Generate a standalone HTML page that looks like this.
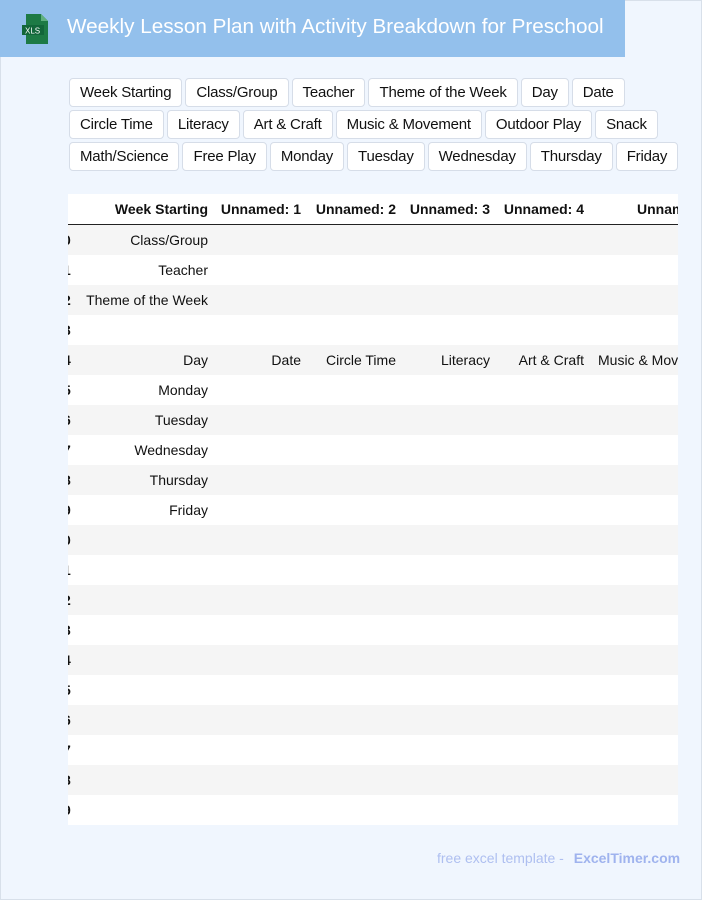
<!DOCTYPE html>
<html><head><meta charset="utf-8"><style>
*{margin:0;padding:0;box-sizing:border-box}
body{width:702px;height:900px;background:#f0f6fe;font-family:"Liberation Sans",sans-serif;position:relative;overflow:hidden;box-shadow:inset 0 0 0 1px #d8e0ea}
.hdr{position:absolute;left:0;top:0;width:625px;height:57px;background:#93c0ec}
.hdr h1{position:absolute;left:67px;top:15px;font-size:20.7px;font-weight:normal;color:#fff;white-space:nowrap}
.icon{position:absolute;left:22px;top:14px;width:28px;height:30px}
.tags{position:absolute;left:69px;top:78px;width:620px}
.row{display:flex;gap:3px;margin-bottom:3px}
.tag{height:29px;padding:0 10px;border:1px solid #d6dde8;border-radius:4px;background:#fff;font-size:15px;letter-spacing:-0.2px;line-height:27px;color:#111;white-space:nowrap}
.tbl{position:absolute;left:68px;top:194px;width:610px;height:631px;overflow:hidden;background:#fff;font-size:14px;color:#111}
.tr{position:absolute;left:0;width:610px;height:30px}
.tr.g{background:#f5f5f5}
.c{position:absolute;top:0;line-height:30px;white-space:nowrap}
.r{text-align:right}
.th{font-weight:bold;border-bottom:1px solid #222;height:31px}
.foot{position:absolute;top:850px;left:437px;font-size:14px;color:#aebff0}
.foot b{color:#9fb3ee;margin-left:6px}
</style></head><body>
<div class="hdr">
<svg class="icon" viewBox="0 0 28 30"><path d="M4 0h15l7 7v23H4z" fill="#1d7a45"/><path d="M19 0v7h7z" fill="#5fb07f"/><rect x="0" y="11" width="22" height="10" fill="#12663a"/><text x="3" y="19.5" font-size="8" fill="#fff" font-family="Liberation Sans">XLS</text></svg>
<h1>Weekly Lesson Plan with Activity Breakdown for Preschool</h1>
</div>
<div class="tags">
<div class="row"><span class="tag">Week Starting</span><span class="tag">Class/Group</span><span class="tag">Teacher</span><span class="tag">Theme of the Week</span><span class="tag">Day</span><span class="tag">Date</span></div>
<div class="row"><span class="tag">Circle Time</span><span class="tag">Literacy</span><span class="tag">Art &amp; Craft</span><span class="tag">Music &amp; Movement</span><span class="tag">Outdoor Play</span><span class="tag">Snack</span></div>
<div class="row"><span class="tag">Math/Science</span><span class="tag">Free Play</span><span class="tag">Monday</span><span class="tag">Tuesday</span><span class="tag">Wednesday</span><span class="tag">Thursday</span><span class="tag">Friday</span></div>
</div>
<div class="tbl">
<div class="tr th" style="top:0">
<span class="c r" style="right:470px">Week Starting</span>
<span class="c r" style="right:377px">Unnamed: 1</span>
<span class="c r" style="right:282px">Unnamed: 2</span>
<span class="c r" style="right:188px">Unnamed: 3</span>
<span class="c r" style="right:94px">Unnamed: 4</span>
<span class="c" style="left:569px">Unnamed: 5</span>
</div>
<div class="tr g" style="top:31px"><span class="c" style="left:-5px;font-weight:bold">0</span><span class="c r" style="right:470px">Class/Group</span></div>
<div class="tr" style="top:61px"><span class="c" style="left:-5px;font-weight:bold">1</span><span class="c r" style="right:470px">Teacher</span></div>
<div class="tr g" style="top:91px"><span class="c" style="left:-5px;font-weight:bold">2</span><span class="c r" style="right:470px">Theme of the Week</span></div>
<div class="tr" style="top:121px"><span class="c" style="left:-5px;font-weight:bold">3</span></div>
<div class="tr g" style="top:151px"><span class="c" style="left:-5px;font-weight:bold">4</span><span class="c r" style="right:470px">Day</span><span class="c r" style="right:377px">Date</span><span class="c r" style="right:282px">Circle Time</span><span class="c r" style="right:188px">Literacy</span><span class="c r" style="right:94px">Art &amp; Craft</span><span class="c" style="left:530px">Music &amp; Movement</span></div>
<div class="tr" style="top:181px"><span class="c" style="left:-5px;font-weight:bold">5</span><span class="c r" style="right:470px">Monday</span></div>
<div class="tr g" style="top:211px"><span class="c" style="left:-5px;font-weight:bold">6</span><span class="c r" style="right:470px">Tuesday</span></div>
<div class="tr" style="top:241px"><span class="c" style="left:-5px;font-weight:bold">7</span><span class="c r" style="right:470px">Wednesday</span></div>
<div class="tr g" style="top:271px"><span class="c" style="left:-5px;font-weight:bold">8</span><span class="c r" style="right:470px">Thursday</span></div>
<div class="tr" style="top:301px"><span class="c" style="left:-5px;font-weight:bold">9</span><span class="c r" style="right:470px">Friday</span></div>
<div class="tr g" style="top:331px"><span class="c" style="left:-5px;font-weight:bold">0</span></div>
<div class="tr" style="top:361px"><span class="c" style="left:-5px;font-weight:bold">1</span></div>
<div class="tr g" style="top:391px"><span class="c" style="left:-5px;font-weight:bold">2</span></div>
<div class="tr" style="top:421px"><span class="c" style="left:-5px;font-weight:bold">3</span></div>
<div class="tr g" style="top:451px"><span class="c" style="left:-5px;font-weight:bold">4</span></div>
<div class="tr" style="top:481px"><span class="c" style="left:-5px;font-weight:bold">5</span></div>
<div class="tr g" style="top:511px"><span class="c" style="left:-5px;font-weight:bold">6</span></div>
<div class="tr" style="top:541px"><span class="c" style="left:-5px;font-weight:bold">7</span></div>
<div class="tr g" style="top:571px"><span class="c" style="left:-5px;font-weight:bold">8</span></div>
<div class="tr" style="top:601px"><span class="c" style="left:-5px;font-weight:bold">9</span></div>
</div>
<div class="foot">free excel template - <b>ExcelTimer.com</b></div>
</body></html>
